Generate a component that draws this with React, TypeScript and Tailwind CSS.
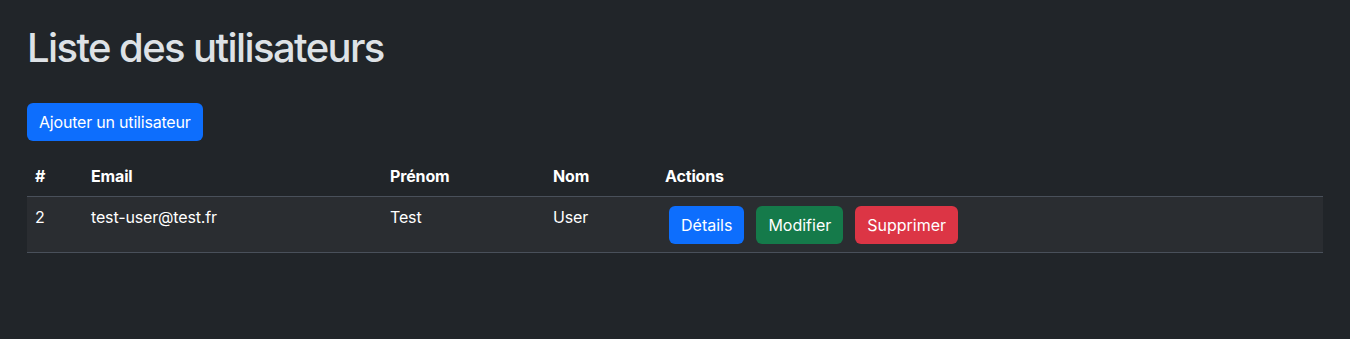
const users = [{ id: 2, email: 'test-user@test.fr', firstName: 'Test', lastName: 'User' }];

export default function App() {
  return (
    <div
      className="min-h-[339px] bg-[#212529] text-[#dee2e6]"
      style={{ fontFamily: 'Inter, "Noto Sans", "Liberation Sans", sans-serif' }}
    >
      <div className="mx-auto w-[1320px] px-3 pt-6">
        <h1 className="mb-[31px] text-[40px] font-medium leading-[48px] tracking-[-1.6px] text-[#dee2e6]">
          Liste des utilisateurs
        </h1>
        <button className="mb-[15px] h-[38px] rounded-md bg-[#0d6efd] px-3 text-base leading-6 tracking-[-0.2px] text-white">
          Ajouter un utilisateur
        </button>
        <table className="w-full border-collapse text-left text-base leading-6 tracking-[-0.15px] text-white">
          <thead>
            <tr className="border-b border-[#49505a]">
              <th className="w-[56px] px-2 py-2 font-bold">#</th>
              <th className="w-[299px] px-2 py-2 font-bold">Email</th>
              <th className="w-[163px] px-2 py-2 font-bold">Prénom</th>
              <th className="w-[112px] px-2 py-2 font-bold">Nom</th>
              <th className="px-2 py-2 font-bold">Actions</th>
            </tr>
          </thead>
          <tbody>
            {users.map((u) => (
              <tr key={u.id} className="border-b border-[#49505a] bg-[#2a2d31]">
                <td className="px-2 py-2 align-top">{u.id}</td>
                <td className="px-2 py-2 align-top">{u.email}</td>
                <td className="px-2 py-2 align-top">{u.firstName}</td>
                <td className="px-2 py-2 align-top">{u.lastName}</td>
                <td className="px-2 py-2 align-top">
                  <div className="flex gap-3 pl-1 pt-px tracking-normal">
                    <button className="h-[38px] rounded-md bg-[#0d6efd] px-3 text-white">Détails</button>
                    <button className="h-[38px] rounded-md bg-[#157a4a] px-3 text-white">Modifier</button>
                    <button className="h-[38px] rounded-md bg-[#dc3545] px-3 text-white">Supprimer</button>
                  </div>
                </td>
              </tr>
            ))}
          </tbody>
        </table>
      </div>
    </div>
  );
}
